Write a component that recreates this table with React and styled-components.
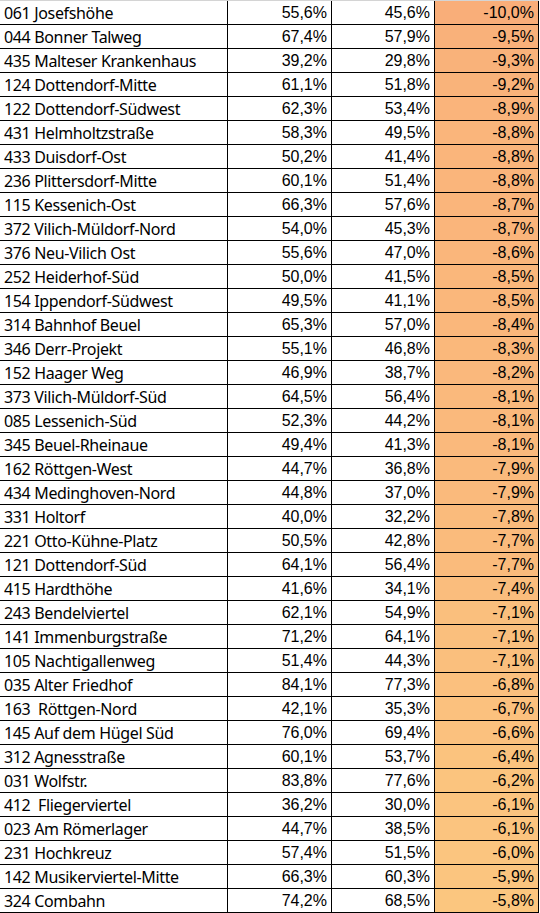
import React from "react";
import styled, { createGlobalStyle } from "styled-components";

const GlobalStyle = createGlobalStyle`
  html, body {
    margin: 0;
    padding: 0;
    background: #ffffff;
  }
`;

const rows = [
  ["061 Josefshöhe", "55,6%", "45,6%", "-10,0%"],
  ["044 Bonner Talweg", "67,4%", "57,9%", "-9,5%"],
  ["435 Malteser Krankenhaus", "39,2%", "29,8%", "-9,3%"],
  ["124 Dottendorf-Mitte", "61,1%", "51,8%", "-9,2%"],
  ["122 Dottendorf-Südwest", "62,3%", "53,4%", "-8,9%"],
  ["431 Helmholtzstraße", "58,3%", "49,5%", "-8,8%"],
  ["433 Duisdorf-Ost", "50,2%", "41,4%", "-8,8%"],
  ["236 Plittersdorf-Mitte", "60,1%", "51,4%", "-8,8%"],
  ["115 Kessenich-Ost", "66,3%", "57,6%", "-8,7%"],
  ["372 Vilich-Müldorf-Nord", "54,0%", "45,3%", "-8,7%"],
  ["376 Neu-Vilich Ost", "55,6%", "47,0%", "-8,6%"],
  ["252 Heiderhof-Süd", "50,0%", "41,5%", "-8,5%"],
  ["154 Ippendorf-Südwest", "49,5%", "41,1%", "-8,5%"],
  ["314 Bahnhof Beuel", "65,3%", "57,0%", "-8,4%"],
  ["346 Derr-Projekt", "55,1%", "46,8%", "-8,3%"],
  ["152 Haager Weg", "46,9%", "38,7%", "-8,2%"],
  ["373 Vilich-Müldorf-Süd", "64,5%", "56,4%", "-8,1%"],
  ["085 Lessenich-Süd", "52,3%", "44,2%", "-8,1%"],
  ["345 Beuel-Rheinaue", "49,4%", "41,3%", "-8,1%"],
  ["162 Röttgen-West", "44,7%", "36,8%", "-7,9%"],
  ["434 Medinghoven-Nord", "44,8%", "37,0%", "-7,9%"],
  ["331 Holtorf", "40,0%", "32,2%", "-7,8%"],
  ["221 Otto-Kühne-Platz", "50,5%", "42,8%", "-7,7%"],
  ["121 Dottendorf-Süd", "64,1%", "56,4%", "-7,7%"],
  ["415 Hardthöhe", "41,6%", "34,1%", "-7,4%"],
  ["243 Bendelviertel", "62,1%", "54,9%", "-7,1%"],
  ["141 Immenburgstraße", "71,2%", "64,1%", "-7,1%"],
  ["105 Nachtigallenweg", "51,4%", "44,3%", "-7,1%"],
  ["035 Alter Friedhof", "84,1%", "77,3%", "-6,8%"],
  ["163  Röttgen-Nord", "42,1%", "35,3%", "-6,7%"],
  ["145 Auf dem Hügel Süd", "76,0%", "69,4%", "-6,6%"],
  ["312 Agnesstraße", "60,1%", "53,7%", "-6,4%"],
  ["031 Wolfstr.", "83,8%", "77,6%", "-6,2%"],
  ["412  Fliegerviertel", "36,2%", "30,0%", "-6,1%"],
  ["023 Am Römerlager", "44,7%", "38,5%", "-6,1%"],
  ["231 Hochkreuz", "57,4%", "51,5%", "-6,0%"],
  ["142 Musikerviertel-Mitte", "66,3%", "60,3%", "-5,9%"],
  ["324 Combahn", "74,2%", "68,5%", "-5,8%"],
];

// colour scale: -10,0 -> deep orange, -5,8 -> light orange
function scaleColor(text) {
  const v = parseFloat(text.replace(",", "."));
  const t = Math.min(1, Math.max(0, (v + 10) / 4.2));
  const from = [249, 174, 121];
  const to = [251, 198, 127];
  const c = from.map((f, i) => Math.round(f + (to[i] - f) * t));
  return `rgb(${c[0]}, ${c[1]}, ${c[2]})`;
}

const Sheet = styled.div`
  width: 539px;
  border-top: 1px solid #d4d4d4;
`;

const Row = styled.div`
  display: grid;
  grid-template-columns: 228px 104px 103px 104px;
  height: 24px;
  box-sizing: border-box;
  border-bottom: 1px solid #000;
`;

const NameCell = styled.div`
  display: flex;
  align-items: center;
  padding: 1px 0 0 4px;
  border-right: 1px solid #000;
  font-family: "Noto Sans", "Liberation Sans", sans-serif;
  font-size: 16px;
  letter-spacing: -0.35px;
  color: #000;
  white-space: pre;
  overflow: hidden;
`;

const NumCell = styled.div`
  display: flex;
  align-items: center;
  justify-content: flex-end;
  padding: 1px 4px 0 0;
  border-right: 1px solid #000;
  font-family: "Liberation Sans", Arial, sans-serif;
  font-size: 16px;
  color: #000;
  background: ${(p) => p.$fill || "transparent"};
`;

export default function App() {
  return (
    <>
      <GlobalStyle />
      <Sheet>
        {rows.map(([name, a, b, diff]) => (
          <Row key={name}>
            <NameCell>{name}</NameCell>
            <NumCell>{a}</NumCell>
            <NumCell>{b}</NumCell>
            <NumCell $fill={scaleColor(diff)}>{diff}</NumCell>
          </Row>
        ))}
      </Sheet>
    </>
  );
}
